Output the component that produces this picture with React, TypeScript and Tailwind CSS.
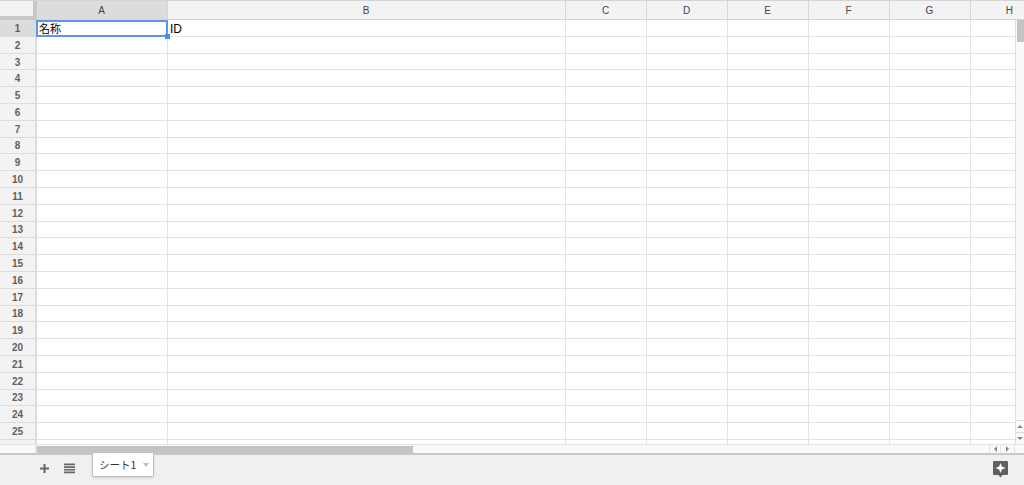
import React from 'react';

const columns = [
  { name: 'A', width: 'w-[131px]' },
  { name: 'B', width: 'w-[398px]' },
  { name: 'C', width: 'w-[81px]' },
  { name: 'D', width: 'w-[81px]' },
  { name: 'E', width: 'w-[81px]' },
  { name: 'F', width: 'w-[81px]' },
  { name: 'G', width: 'w-[81px]' },
];

const rows = Array.from({ length: 26 }, (_, i) => i + 1);
const font = { fontFamily: '"Liberation Sans", Arial, sans-serif' };
const cjk = { fontFamily: '"Noto Sans CJK JP", sans-serif' };

const ColumnHeader = () => (
  <div className="flex h-5 shrink-0 border-t border-[#d4d4d4]">
    <div className="h-full w-[37px] shrink-0 border-r-4 border-b-4 border-[#c8c8c8] bg-[#f3f3f3]" />
    {columns.map((col, i) => (
      <div
        key={col.name}
        className={`${col.width} flex shrink-0 items-center justify-center border-r border-b border-[#d6d6d6] pr-px text-[10px] text-[#444] ${
          i === 0 ? 'bg-[#dcdcdc]' : 'bg-[#f3f3f3]'
        }`}
      >
        {col.name}
      </div>
    ))}
    <div className="flex flex-1 items-center justify-end border-b border-[#d6d6d6] bg-[#f3f3f3] pr-[11px] text-[10px] text-[#444]">
      H
    </div>
  </div>
);

const Row = ({ n }: { n: number }) => (
  <div className="flex h-[16.8px] shrink-0">
    <div
      className={`flex w-[37px] shrink-0 items-center justify-center border-r-2 border-b border-[#dcdcdc] pt-px text-[10px] font-bold text-[#5f5f5f] ${
        n === 1 ? 'bg-[#dcdcdc]' : 'bg-[#f3f3f3]'
      }`}
    >
      {n < 26 ? n : null}
    </div>
    {columns.map((col) => (
      <div key={col.name} className={`${col.width} relative shrink-0 border-r border-b border-[#e2e2e2] bg-white`}>
        {n === 1 && col.name === 'A' && (
          <>
            <div className="absolute top-0 -left-px z-10 flex h-[17px] w-[132px] items-center border-2 border-[#5b95f0] pl-px text-[11px] text-black">
              <span style={cjk}>名称</span>
            </div>
            <div className="absolute top-[14px] left-[128px] z-20 h-[5px] w-[5px] bg-[#4a8af4]" />
          </>
        )}
        {n === 1 && col.name === 'B' && (
          <div className="flex h-full items-center pt-[2px] pl-[2px] text-[12px] text-black">ID</div>
        )}
      </div>
    ))}
    <div className="flex-1 border-b border-[#e2e2e2] bg-white" />
  </div>
);

const VerticalScrollbar = () => (
  <div className="relative w-[9px] shrink-0 border-l border-[#e0e0e0] bg-[#fafafa]">
    <div className="absolute top-0 left-[1px] h-[22px] w-[7px] bg-[#c4c4c4]" />
    <div className="absolute bottom-0 left-0 flex w-full flex-col">
      <div className="flex h-3 items-center justify-center border-t border-[#dcdcdc]">
        <div className="h-0 w-0 border-x-[3px] border-b-[3px] border-x-transparent border-b-[#888]" />
      </div>
      <div className="flex h-3 items-center justify-center border-t border-[#dcdcdc]">
        <div className="h-0 w-0 border-x-[3px] border-t-[3px] border-x-transparent border-t-[#888]" />
      </div>
    </div>
  </div>
);

const HorizontalScrollbar = () => (
  <div className="flex h-[9px] shrink-0 border-t border-[#e4e4e4] bg-[#fafafa]">
    <div className="w-[37px] shrink-0 border-r-2 border-[#e4e4e4]" />
    <div className="flex-1 pt-px">
      <div className="h-[7px] w-[376px] bg-[#c4c4c4]" />
    </div>
    <div className="mr-[9px] flex w-[26px] shrink-0 items-center">
      <div className="flex h-full w-3 items-center justify-center border-x border-[#e4e4e4]">
        <div className="h-0 w-0 border-y-[3px] border-r-[3px] border-y-transparent border-r-[#888]" />
      </div>
      <div className="flex h-full w-[14px] items-center justify-center border-r border-[#e4e4e4]">
        <div className="h-0 w-0 border-y-[3px] border-l-[3px] border-y-transparent border-l-[#888]" />
      </div>
    </div>
  </div>
);

const SheetBar = () => (
  <div className="flex flex-1 items-start justify-between border-t-2 border-[#c9c9c9] bg-[#f0f0f0]">
    <div className="flex items-start">
      <div className="ml-[39px] flex h-[26px] items-center gap-[14px]">
        <svg width="11" height="11" viewBox="0 0 11 11">
          <path d="M4.5 1h2v3.5H10v2H6.5V10h-2V6.5H1v-2h3.5z" fill="#666" />
        </svg>
        <svg width="11" height="11" viewBox="0 0 11 11">
          <path d="M0 .5h11V2.2H0zM0 3.2h11v1.7H0zM0 5.9h11v1.7H0zM0 8.6h11v1.7H0z" fill="#666" />
        </svg>
      </div>
      <div className="-mt-[2px] ml-[17px] flex h-[24px] w-[62px] items-center rounded-b-[2px] border-r border-b border-l border-[#c0c0c0] bg-white pl-[6px] shadow-sm">
        <span className="whitespace-nowrap text-[10.5px] text-[#333]" style={cjk}>
          シート1
        </span>
        <div className="ml-[7px] h-0 w-0 border-x-[3px] border-t-[4px] border-x-transparent border-t-[#bbb]" />
      </div>
    </div>
    <div className="mt-[6px] mr-[16px]">
      <svg width="15" height="17" viewBox="0 0 15 17">
        <path d="M1 0h13a1 1 0 0 1 1 1v12a1 1 0 0 1-1 1H9.5l-2 2.5-2-2.5H1a1 1 0 0 1-1-1V1a1 1 0 0 1 1-1z" fill="#5f5f5f" />
        <path d="M7.5 2l1.4 3.6L12.5 7 8.9 8.4 7.5 12 6.1 8.4 2.5 7l3.6-1.4z" fill="#fff" />
      </svg>
    </div>
  </div>
);

export default function App() {
  return (
    <div className="flex h-[485px] w-[1024px] flex-col overflow-hidden bg-white" style={font}>
      <ColumnHeader />
      <div className="flex h-[424px] shrink-0">
        <div className="flex min-w-0 flex-1 flex-col overflow-hidden">
          {rows.map((n) => (
            <Row key={n} n={n} />
          ))}
        </div>
        <VerticalScrollbar />
      </div>
      <HorizontalScrollbar />
      <SheetBar />
    </div>
  );
}
